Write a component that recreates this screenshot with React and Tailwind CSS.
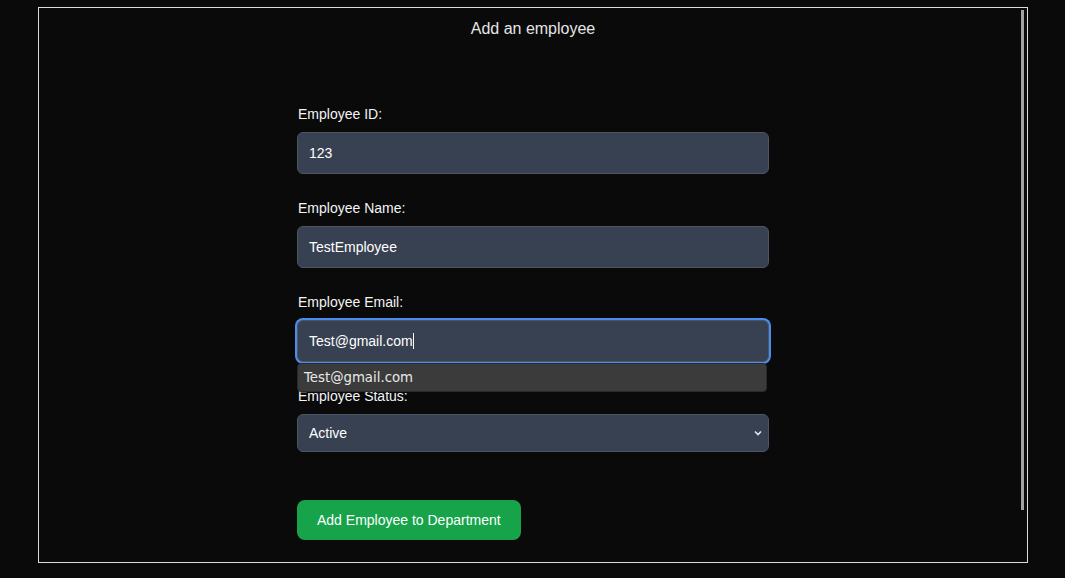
import React from 'react';

const Field = ({ label, children }) => (
  <div className="mb-6">
    <label className="block mb-2 pl-px text-sm leading-5 text-[#f3f4f6]">{label}</label>
    {children}
  </div>
);

const inputCls =
  'block w-full h-[42px] px-[11px] rounded-md bg-[#374151] border border-[#4b5563] text-sm text-white outline-none';

export default function App() {
  return (
    <div className="min-h-screen w-full bg-[#0a0a0a] pt-[7px] font-['Liberation_Sans',Arial,sans-serif]">
      <div className="relative ml-[38px] w-[990px] h-[556px] border border-[#dcdcdc] overflow-hidden">
        {/* scrollbar thumb */}
        <div className="absolute right-[3px] top-[2px] w-[3px] h-[500px] bg-[#a3a3a3]" />

        <h2 className="pt-[9px] text-center text-base leading-6 text-[#e5e5e5]">Add an employee</h2>

        <form className="w-[472px] ml-[258px] mt-[63px]" onSubmit={(e) => e.preventDefault()}>
          <Field label="Employee ID:">
            <input className={inputCls} defaultValue="123" readOnly />
          </Field>

          <Field label="Employee Name:">
            <input className={inputCls} defaultValue="TestEmployee" readOnly />
          </Field>

          <Field label="Employee Email:">
            <div className="relative">
              <div className="flex items-center w-full h-[42px] px-[11px] rounded-md bg-[#374151] border border-[#4b5563] text-sm text-white ring-2 ring-[#4a8cf0]">
                <span>Test@gmail.com</span>
                <span className="inline-block w-px h-4 bg-white" />
              </div>
              {/* browser autofill suggestion */}
              <div className="absolute left-0 top-[43px] z-10 w-[470px] h-[29px] flex items-center px-[6px] rounded bg-[#3b3b3b] border border-[#2a2a2a] text-[13.3px] text-[#e8e8e8] font-['DejaVu_Sans',sans-serif]">
                Test@gmail.com
              </div>
            </div>
          </Field>

          <Field label="Employee Status:">
            <div className="relative">
              <select className="block w-full h-[38px] px-[11px] rounded-md bg-[#374151] border border-[#4b5563] text-sm text-white appearance-none outline-none">
                <option>Active</option>
                <option>Inactive</option>
              </select>
              <svg
                className="absolute right-[6px] top-[15px] w-[10px] h-[8px] pointer-events-none"
                viewBox="0 0 10 8"
                fill="none"
                stroke="#e5e7eb"
                strokeWidth="1.6"
              >
                <path d="M2 2.5l3 3 3-3" />
              </svg>
            </div>
          </Field>

          <button
            type="submit"
            className="mt-[24px] px-5 py-2.5 rounded-lg bg-[#16a34a] text-sm leading-5 text-white"
          >
            Add Employee to Department
          </button>
        </form>
      </div>
    </div>
  );
}
